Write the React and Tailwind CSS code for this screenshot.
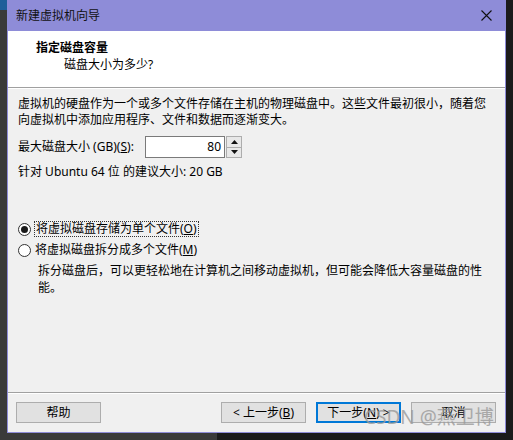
import React from "react";

const font = { fontFamily: '"Noto Sans", "Noto Sans CJK SC", sans-serif' };

function Radio({ checked }) {
  return (
    <span className="relative flex h-[13px] w-[13px] shrink-0 items-center justify-center rounded-full border border-[#333333] bg-white">
      {checked && <span className="h-[7px] w-[7px] rounded-full bg-[#1a1a1a]" />}
    </span>
  );
}

function Btn({ children, primary }) {
  return (
    <div
      className={
        "flex h-[21px] w-[85px] items-center justify-center bg-[#e1e1e1] text-[12px] text-black " +
        (primary ? "border-2 border-[#0078d7]" : "border border-[#adadad]")
      }
    >
      {children}
    </div>
  );
}

export default function App() {
  return (
    <div className="relative h-[440px] w-[513px] overflow-hidden bg-[#1b1b1b]" style={font}>
      <div className="flex h-[433px]">
        <div className="flex w-[7px] flex-col bg-[#3a3a3a]">
          <div className="h-[10px] bg-[#1e5f9a]" />
        </div>
        <div className="flex w-[499px] flex-col border-x border-b border-[#8e8cd8] bg-[#f0f0f0]">
          {/* title bar */}
          <div className="flex h-[31px] items-center justify-between bg-[#8e8cd8] pl-[8px] pr-[10px]">
            <span className="text-[12px] leading-none text-[#111]">新建虚拟机向导</span>
            <svg width="11" height="11" viewBox="0 0 11 11" className="mr-[3px]">
              <path d="M0.5 0.5 L10.5 10.5 M10.5 0.5 L0.5 10.5" stroke="#111" strokeWidth="1.1" />
            </svg>
          </div>
          {/* header */}
          <div className="flex h-[56px] flex-col bg-white pl-[28px] pt-[9px]">
            <span className="text-[12px] font-bold leading-[16px] text-black">指定磁盘容量</span>
            <span className="mt-[1px] pl-[28px] text-[12px] leading-[16px] text-black">磁盘大小为多少?</span>
          </div>
          <div className="h-px bg-[#a0a0a0]" />
          <div className="h-px bg-white" />
          {/* body */}
          <div className="flex h-[303px] flex-col pl-[10px] pt-[7px] text-[12px] text-black">
            <p className="leading-[16px]">虚拟机的硬盘作为一个或多个文件存储在主机的物理磁盘中。这些文件最初很小，随着您</p>
            <p className="leading-[16px]">向虚拟机中添加应用程序、文件和数据而逐渐变大。</p>
            <div className="mt-[8px] flex h-[22px] items-center">
              <span className="w-[127px] leading-[16px]">
                最大磁盘大小 (GB)(<span className="underline">S</span>):
              </span>
              <div className="flex h-[22px] w-[80px] items-center justify-end border border-[#7a7a7a] bg-white pr-[3px]">
                <span className="leading-none">80</span>
              </div>
              <div className="ml-[1px] flex h-[22px] w-[16px] flex-col border border-[#adadad] bg-[#e8e8e8]">
                <div className="flex flex-1 items-center justify-center border-b border-[#adadad]">
                  <svg width="7" height="4" viewBox="0 0 7 4"><path d="M3.5 0 L7 4 L0 4 Z" fill="#111" /></svg>
                </div>
                <div className="flex flex-1 items-center justify-center">
                  <svg width="7" height="4" viewBox="0 0 7 4"><path d="M0 0 L7 0 L3.5 4 Z" fill="#111" /></svg>
                </div>
              </div>
            </div>
            <p className="mt-[6px] leading-[16px]">针对 Ubuntu 64 位 的建议大小: 20 GB</p>
            <div className="mt-[41px] flex h-[16px] items-center">
              <Radio checked />
              <span className="ml-[3px] border border-dotted border-[#333] px-[1px] leading-[14px]">
                将虚拟磁盘存储为单个文件(<span className="underline">O</span>)
              </span>
            </div>
            <div className="mt-[5px] flex h-[16px] items-center">
              <Radio />
              <span className="ml-[4px] leading-[14px]">
                将虚拟磁盘拆分成多个文件(<span className="underline">M</span>)
              </span>
            </div>
            <p className="mt-[4px] w-[478px] pl-[20px] leading-[17px]">
              拆分磁盘后，可以更轻松地在计算机之间移动虚拟机，但可能会降低大容量磁盘的性能。
            </p>
          </div>
          <div className="h-px bg-[#a0a0a0]" />
          <div className="h-px bg-white" />
          {/* footer */}
          <div className="flex flex-1 items-start pl-[8px] pt-[8px]">
            <Btn>帮助</Btn>
            <div className="ml-[120px] flex gap-[10px]">
              <Btn>
                &lt; 上一步(<span className="underline">B</span>)
              </Btn>
              <Btn primary>
                下一步(<span className="underline">N</span>) &gt;
              </Btn>
              <Btn>取消</Btn>
            </div>
          </div>
        </div>
        <div className="flex w-[7px] flex-col bg-[#1b1b1b]" />
      </div>
      <div className="flex h-[7px]">
        <div className="w-[217px] bg-[#3a3a3a]" />
        <div className="flex-1 bg-[#1b1b1b]" />
      </div>
      <div className="pointer-events-none absolute left-[364px] top-[404px] text-[19px] leading-[26px] text-[#9a9a9a] opacity-80">
        CSDN @燕卫博
      </div>
    </div>
  );
}
